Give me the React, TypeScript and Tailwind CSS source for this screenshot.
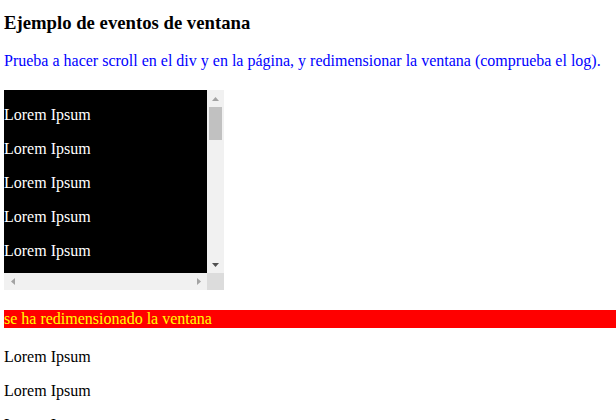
const boxLines = Array.from({ length: 24 }, (_, i) => i);
const pageLines = Array.from({ length: 6 }, (_, i) => i);

// flecha de la barra de scroll (triángulo 7x4)
function Arrow({ dir, color }: { dir: 'up' | 'down' | 'left' | 'right'; color: string }) {
  if (dir === 'up' || dir === 'down') {
    return (
      <svg width="7" height="4" viewBox="0 0 7 4">
        <polygon points={dir === 'up' ? '0,4 3.5,0 7,4' : '0,0 7,0 3.5,4'} fill={color} />
      </svg>
    );
  }
  return (
    <svg width="4" height="7" viewBox="0 0 4 7">
      <polygon points={dir === 'left' ? '4,0 4,7 0,3.5' : '0,0 0,7 4,3.5'} fill={color} />
    </svg>
  );
}

export default function App() {
  return (
    <div className="min-h-screen bg-white pl-1 pt-[11.5px] font-['Liberation_Serif',serif] text-base leading-[normal] text-black">
      <h3 className="mb-[18.72px] text-[18.72px] font-bold">
        Ejemplo de eventos de ventana
      </h3>
      <p className="text-[#0000ff]">
        Prueba a hacer scroll en el div y en la página, y redimensionar la
        ventana (comprueba el log).
      </p>

      {/* caja con scroll */}
      <div className="my-5 flex h-[200px] w-[220px] flex-col">
        <div className="flex h-[183px]">
          <div className="w-[203px] overflow-hidden bg-black text-white">
            {boxLines.map((i) => (
              <p key={i} className="my-4">
                Lorem Ipsum
              </p>
            ))}
          </div>
          <div className="flex w-[17px] flex-col bg-[#f1f1f1]">
            <div className="flex h-[17px] items-center justify-center">
              <Arrow dir="up" color="#a3a3a3" />
            </div>
            <div className="mx-[2px] h-[33px] bg-[#c1c1c1]" />
            <div className="flex-1" />
            <div className="flex h-[17px] items-center justify-center">
              <Arrow dir="down" color="#505050" />
            </div>
          </div>
        </div>
        <div className="flex h-[17px]">
          <div className="flex w-[203px] items-center justify-between bg-[#f1f1f1]">
            <div className="flex w-[17px] justify-center">
              <Arrow dir="left" color="#a3a3a3" />
            </div>
            <div className="flex w-[17px] justify-center">
              <Arrow dir="right" color="#a3a3a3" />
            </div>
          </div>
          <div className="w-[17px] bg-[#dcdcdc]" />
        </div>
      </div>

      <div className="my-5 bg-[#ff0000] text-[#ffff00]">
        se ha redimensionado la ventana
      </div>

      {pageLines.map((i) => (
        <p key={i} className="my-4">
          Lorem Ipsum
        </p>
      ))}
    </div>
  );
}
